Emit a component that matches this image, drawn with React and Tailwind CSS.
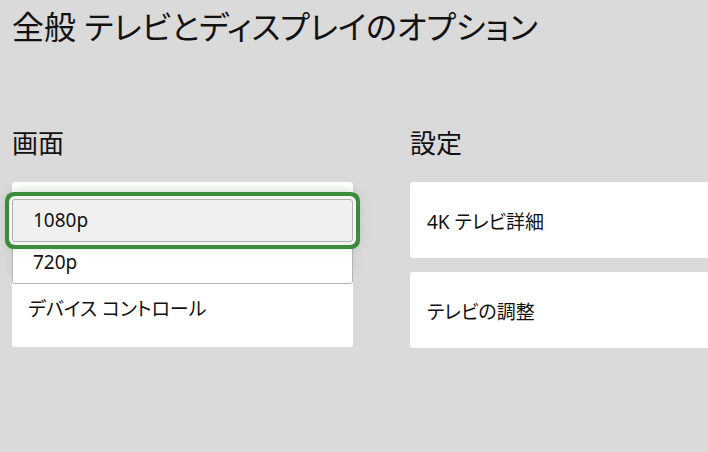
import React from 'react'

const font = "font-['Noto_Sans','Noto_Sans_CJK_JP',sans-serif] [font-feature-settings:'palt']"

const Card = ({ children, className = '' }) => (
  <div className={`h-[76px] bg-white rounded-[3px] flex items-center pl-[17px] pt-[4px] text-[19px] text-[#111] ${className}`}>
    {children}
  </div>
)

export default function App() {
  return (
    <div className={`w-[708px] h-[452px] overflow-hidden bg-[#dadada] text-[#111] ${font}`}>
      {/* Title */}
      <h1 className="pl-3 pt-[11px] text-[32px] leading-none whitespace-nowrap">
        全般 テレビとディスプレイのオプション
      </h1>

      <div className="flex gap-[57px] pl-3 mt-[87px]">
        {/* LEFT */}
        <div className="w-[341px] shrink-0">
          <h2 className="text-[26px] leading-none">画面</h2>

          <div className="relative mt-[26px] h-[165px] bg-white rounded-[3px]">
            <div className="absolute left-0 right-0 bottom-0 h-[75px] flex items-center pl-4 text-[19px]">
              デバイス コントロール
            </div>

            {/* Dropdown */}
            <div className="absolute left-0 right-0 top-[17px] h-[85px] bg-white border border-[#b4b4b4] rounded-[3px] flex flex-col shadow-[0_-8px_12px_rgba(0,0,0,0.08)]">
              <div className="h-[43px] -mx-px -mt-px bg-[#f0f0f0] border border-[#b4b4b4] rounded-[3px] flex items-center pl-5 text-[19px] ring-4 ring-[#3a8b3a] ring-offset-[3px] ring-offset-[#f4f4f4] shadow-[0_0_12px_4px_rgba(61,141,61,0.35)]">
                1080p
              </div>
              <div className="flex-1 flex items-center pl-5 text-[19px]">720p</div>
            </div>
          </div>
        </div>

        {/* RIGHT */}
        <div className="w-[341px] shrink-0">
          <h2 className="text-[26px] leading-none">設定</h2>
          <div className="mt-[26px] flex flex-col gap-[14px]">
            <Card>4K テレビ詳細</Card>
            <Card>テレビの調整</Card>
          </div>
        </div>
      </div>
    </div>
  )
}
